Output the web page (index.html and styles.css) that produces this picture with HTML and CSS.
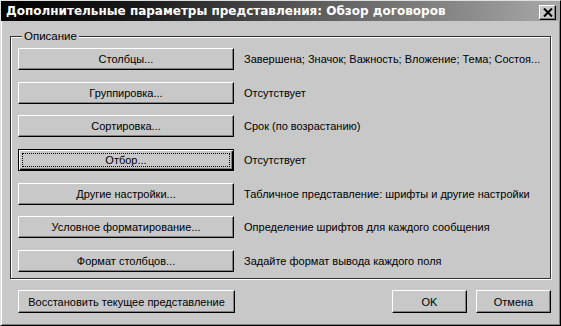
FILE: index.html
```html
<!DOCTYPE html>
<html lang="ru">
<head>
<meta charset="utf-8">
<title>Дополнительные параметры представления</title>
<link rel="stylesheet" href="styles.css">
</head>
<body>
<div class="window">
  <div class="titlebar">
    <span class="title">Дополнительные параметры представления: Обзор договоров</span>
    <button class="close" aria-label="Закрыть">
      <svg width="10" height="9" viewBox="0 0 10 9"><path d="M1 0.5 L9 8.5 M9 0.5 L1 8.5" stroke="#000" stroke-width="2" fill="none"/></svg>
    </button>
  </div>
  <div class="body">
    <fieldset class="group">
      <legend class="legend">Описание</legend>
      <div class="rows">
        <div class="row"><button class="btn">Столбцы...</button><span class="desc">Завершена; Значок; Важность; Вложение; Тема; Состоя...</span></div>
        <div class="row"><button class="btn">Группировка...</button><span class="desc">Отсутствует</span></div>
        <div class="row"><button class="btn">Сортировка...</button><span class="desc">Срок (по возрастанию)</span></div>
        <div class="row"><button class="btn default"><span class="focus">Отбор...</span></button><span class="desc">Отсутствует</span></div>
        <div class="row"><button class="btn">Другие настройки...</button><span class="desc">Табличное представление: шрифты и другие настройки</span></div>
        <div class="row"><button class="btn">Условное форматирование...</button><span class="desc">Определение шрифтов для каждого сообщения</span></div>
        <div class="row"><button class="btn">Формат столбцов...</button><span class="desc">Задайте формат вывода каждого поля</span></div>
      </div>
    </fieldset>
    <div class="footer">
      <button class="btn reset">Восстановить текущее представление</button>
      <div class="actions">
        <button class="btn small">OK</button>
        <button class="btn small">Отмена</button>
      </div>
    </div>
  </div>
</div>
</body>
</html>
```
FILE: styles.css
```css
* { box-sizing: border-box; }
html, body { margin: 0; padding: 0; background: #c8c8c8; }
body {
  font-family: "Liberation Sans", Arial, sans-serif;
  font-size: 11px;
  color: #000;
}
.window {
  width: 561px;
  height: 326px;
  background: #c8c8c8;
  border-left: 1px solid #e0e0e0;
  border-top: 1px solid #e0e0e0;
  border-right: 1px solid #000;
  border-bottom: 1px solid #000;
  box-shadow: inset 1px 1px #fff, inset -1px -1px #808080;
  padding: 0 2px 2px 2px;
  display: flex;
  flex-direction: column;
}
.titlebar {
  height: 20px;
  margin: 0 -2px;
  padding: 0 4px 0 5px;
  background: linear-gradient(to right, #000 0%, #1a1a1a 25%, #5a5a5a 55%, #a8a8a8 100%);
  display: flex;
  align-items: center;
  justify-content: space-between;
}
.title {
  color: #fff;
  font-family: "DejaVu Sans", sans-serif;
  font-weight: bold;
  font-size: 12px;
  white-space: nowrap;
}
.close {
  width: 17px;
  height: 15px;
  padding: 0;
  margin-top: 2px;
  background: #c8c8c8;
  border-left: 1px solid #fff;
  border-top: 1px solid #fff;
  border-right: 1px solid #000;
  border-bottom: 1px solid #000;
  box-shadow: inset -1px -1px #808080;
  display: flex;
  align-items: center;
  justify-content: center;
}
.body {
  flex: 1;
  padding: 9px 7px 0 7px;
  display: flex;
  flex-direction: column;
}
.group {
  margin: 0;
  padding: 5px 0 6px 7px;
  height: 249px;
  border: 1px solid #303030;
  box-shadow: inset 1px 1px #fff, 1px 1px #fff;
}
.legend {
  padding: 0 2px;
  margin-left: 4px;
  background: #c8c8c8;
  line-height: 13px;
  font-size: 11.5px;
}
.rows {
  display: flex;
  flex-direction: column;
  gap: 11.7px;
}
.row {
  display: flex;
  align-items: center;
  gap: 10px;
  height: 22px;
}
.btn {
  font-family: "Liberation Sans", Arial, sans-serif;
  font-size: 11px;
  color: #000;
  background: #c8c8c8;
  width: 216px;
  height: 22px;
  padding: 0;
  border-left: 1px solid #fff;
  border-top: 1px solid #fff;
  border-right: 1px solid #000;
  border-bottom: 1px solid #000;
  box-shadow: inset -1px -1px #808080;
  flex-shrink: 0;
  white-space: nowrap;
}
.btn.default {
  border: 1px solid #000;
  box-shadow: inset 1px 1px #fff, inset -1px -1px #000, inset -2px -2px #808080;
  padding: 3px;
}
.focus {
  display: block;
  height: 100%;
  line-height: 12px;
  border: 1px dotted #000;
}
.desc { white-space: nowrap; font-size: 11px; }
.footer {
  margin-top: 11px;
  display: flex;
  justify-content: space-between;
  padding-left: 8px;
  padding-right: 0;
}
.btn.reset { width: 217px; height: 23px; }
.actions { display: flex; gap: 9px; }
.btn.small { width: 75px; height: 23px; }
```
